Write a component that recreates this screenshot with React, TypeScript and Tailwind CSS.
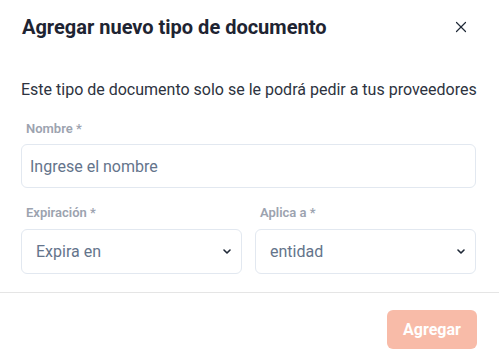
import React from 'react';
import { X } from 'lucide-react';

const Chevron = () => (
  <svg width="8" height="5" viewBox="0 0 8 5" fill="none" className="text-[#1f2937]">
    <path d="M1 1l3 3 3-3" stroke="currentColor" strokeWidth="1.6" strokeLinecap="round" strokeLinejoin="round" />
  </svg>
);

const SelectBox = ({ value }: { value: string }) => (
  <button
    type="button"
    className="mt-[8px] flex h-[45px] w-full items-center justify-between rounded-md border border-[#e2e8f0] bg-white pl-[14px] pr-[10px] text-left text-base text-[#64748b]"
  >
    <span>{value}</span>
    <Chevron />
  </button>
);

const Label = ({ children }: { children: React.ReactNode }) => (
  <label className="block pl-[5px] text-[13px] font-semibold leading-4 text-[#9ca3af]">{children}</label>
);

export default function App() {
  return (
    <div className="h-[364px] w-[499px] overflow-hidden bg-white font-['Roboto',sans-serif]">
      {/* Header */}
      <div className="flex items-start justify-between pl-[22px] pr-[29px] pt-[13px]">
        <h2 className="text-xl font-bold leading-7 text-[#1e2432]">Agregar nuevo tipo de documento</h2>
        <button type="button" className="mt-[5px] text-[#1f2937]">
          <X size={18} strokeWidth={1.6} />
        </button>
      </div>

      {/* Body */}
      <div className="pl-[21px] pr-[23px]">
        <p className="mt-[37px] whitespace-nowrap text-base leading-6 text-[#2d3340]">
          Este tipo de documento solo se le podrá pedir a tus proveedores
        </p>

        <div className="mt-[19px]">
          <Label>Nombre *</Label>
        </div>
        <input
          type="text"
          placeholder="Ingrese el nombre"
          className="mt-[7px] block h-[44px] w-full rounded-md border border-[#e2e8f0] px-[8px] text-base text-[#1f2937] outline-none placeholder:text-[#64748b]"
        />

        <div className="mt-[17px] grid grid-cols-2 gap-[13px]">
          <div>
            <Label>Expiración *</Label>
            <SelectBox value="Expira en" />
          </div>
          <div>
            <Label>Aplica a *</Label>
            <SelectBox value="entidad" />
          </div>
        </div>
      </div>

      {/* Footer */}
      <div className="mt-[18px] border-t border-[#e5e5e5]">
        <div className="flex justify-end pr-[22px] pt-[17px]">
          <button
            type="button"
            disabled
            className="h-[39px] w-[90px] rounded-md bg-[#f8bba8] text-base font-bold text-white"
          >
            Agregar
          </button>
        </div>
      </div>
    </div>
  );
}
